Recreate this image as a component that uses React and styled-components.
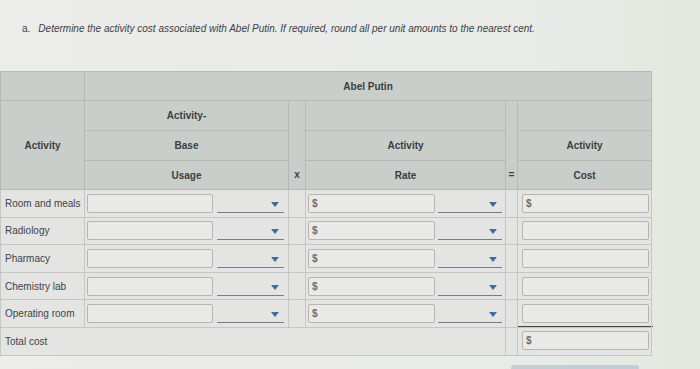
import React from 'react';
import styled, { createGlobalStyle } from 'styled-components';

const GlobalStyle = createGlobalStyle`
  body {
    margin: 0;
    background: #ebebea;
    font-family: 'Liberation Sans', Arial, sans-serif;
  }
`;

const Page = styled.div`
  width: 700px;
  height: 369px;
  overflow: hidden;
  background: linear-gradient(90deg, #ececeb 0%, #e9ebe8 70%, #e2e8df 100%);
`;

const Prompt = styled.p`
  margin: 0;
  padding: 23px 0 0 22px;
  height: 71px;
  box-sizing: border-box;
  font-size: 10px;
  font-style: italic;
  color: #3c3f44;
  span {
    font-style: normal;
    margin-right: 8px;
  }
`;

const Table = styled.table`
  border-collapse: collapse;
  width: 651px;
  table-layout: fixed;
  font-size: 10px;
  color: #3d4043;
  background: #e4e5e2;
  border: 1px solid #b6bbb8;
`;

const HeadCell = styled.th`
  background: #c9cecb;
  border: 1px solid #b4bab7;
  font-weight: bold;
  font-size: 10px;
  color: #3b3e40;
  height: ${(p) => p.$h || 28}px;
  padding: 0 0 ${(p) => p.$pb || 0}px;
  text-align: center;
  vertical-align: ${(p) => p.$va || 'middle'};
`;

const LabelCell = styled.td`
  border: 1px solid #c4c8c5;
  border-right-width: ${(p) => (p.$noRight ? 0 : 1)}px;
  padding: 0 0 0 4px;
  height: 26.6px;
  font-size: 10px;
  color: #404346;
  white-space: nowrap;
  vertical-align: middle;
`;

const Cell = styled.td`
  border: 1px solid #c4c8c5;
  border-left-width: ${(p) => (p.$noLeft ? 0 : 1)}px;
  border-right-width: ${(p) => (p.$noRight ? 0 : 1)}px;
  padding: 0 0 0 ${(p) => p.$pl || 0}px;
  height: 26.6px;
  vertical-align: middle;
`;

const Pair = styled.div`
  display: flex;
  align-items: flex-end;
  gap: ${(p) => p.$gap || 4}px;
`;

const Field = styled.div`
  display: flex;
  align-items: center;
  box-sizing: border-box;
  width: ${(p) => p.$w}px;
  height: 19px;
  border: 1px solid #b3b6b4;
  border-radius: 2px;
  background: #e9e9e7;
  padding-left: 3px;
  font-size: 10px;
  font-weight: bold;
  color: #6a6d70;
`;

const Select = styled.div`
  position: relative;
  width: ${(p) => p.$w}px;
  height: 16px;
  border-bottom: 1.5px solid #6f7f8e;
`;

const Caret = styled.div`
  position: absolute;
  right: 5px;
  top: 6px;
  width: 0;
  height: 0;
  border-left: 4.5px solid transparent;
  border-right: 4.5px solid transparent;
  border-top: 5px solid #3b6d9e;
`;

const TotalWrap = styled.div`
  border-top: 1.5px solid #3e4346;
  margin: -6px -2px 0 0;
  padding: 4px 0 0 4px;
`;

const Footer = styled.div`
  display: flex;
  justify-content: flex-end;
  width: 651px;
  padding-top: 9px;
`;

const Button = styled.div`
  width: 128px;
  height: 20px;
  margin-right: 12px;
  border-radius: 3px;
  background: #c3cdd3;
`;

const rows = ['Room and meals', 'Radiology', 'Pharmacy', 'Chemistry lab', 'Operating room'];

function Dropdown({ w }) {
  return (
    <Select $w={w}>
      <Caret />
    </Select>
  );
}

export default function App() {
  return (
    <Page>
      <GlobalStyle />
      <Prompt>
        <span>a.</span>Determine the activity cost associated with Abel Putin. If required, round all per unit amounts to the nearest cent.
      </Prompt>
      <Table>
        <colgroup>
          <col style={{ width: 84 }} />
          <col style={{ width: 204 }} />
          <col style={{ width: 17 }} />
          <col style={{ width: 200 }} />
          <col style={{ width: 12 }} />
          <col style={{ width: 134 }} />
        </colgroup>
        <thead>
          <tr>
            <HeadCell />
            <HeadCell colSpan={5}>Abel Putin</HeadCell>
          </tr>
          <tr>
            <HeadCell rowSpan={3}>Activity</HeadCell>
            <HeadCell $h={29}>Activity-</HeadCell>
            <HeadCell rowSpan={3} $va="bottom" $pb={9}>x</HeadCell>
            <HeadCell $h={29} />
            <HeadCell rowSpan={3} $va="bottom" $pb={9}>=</HeadCell>
            <HeadCell $h={29} />
          </tr>
          <tr>
            <HeadCell $h={29}>Base</HeadCell>
            <HeadCell $h={29}>Activity</HeadCell>
            <HeadCell $h={29}>Activity</HeadCell>
          </tr>
          <tr>
            <HeadCell>Usage</HeadCell>
            <HeadCell>Rate</HeadCell>
            <HeadCell>Cost</HeadCell>
          </tr>
        </thead>
        <tbody>
          {rows.map((name, i) => (
            <tr key={name}>
              <LabelCell>{name}</LabelCell>
              <Cell $pl={2}>
                <Pair $gap={4}>
                  <Field $w={126} />
                  <Dropdown w={67} />
                </Pair>
              </Cell>
              <Cell />
              <Cell $pl={2}>
                <Pair $gap={3}>
                  <Field $w={127}>$</Field>
                  <Dropdown w={64} />
                </Pair>
              </Cell>
              <Cell />
              <Cell $pl={4}>
                <Field $w={127}>{i === 0 ? '$' : ''}</Field>
              </Cell>
            </tr>
          ))}
          <tr>
            <LabelCell $noRight>Total cost</LabelCell>
            <Cell $noLeft $noRight />
            <Cell $noLeft $noRight />
            <Cell $noLeft />
            <Cell />
            <Cell>
              <TotalWrap>
                <Field $w={127}>$</Field>
              </TotalWrap>
            </Cell>
          </tr>
        </tbody>
      </Table>
      <Footer>
        <Button />
      </Footer>
    </Page>
  );
}
